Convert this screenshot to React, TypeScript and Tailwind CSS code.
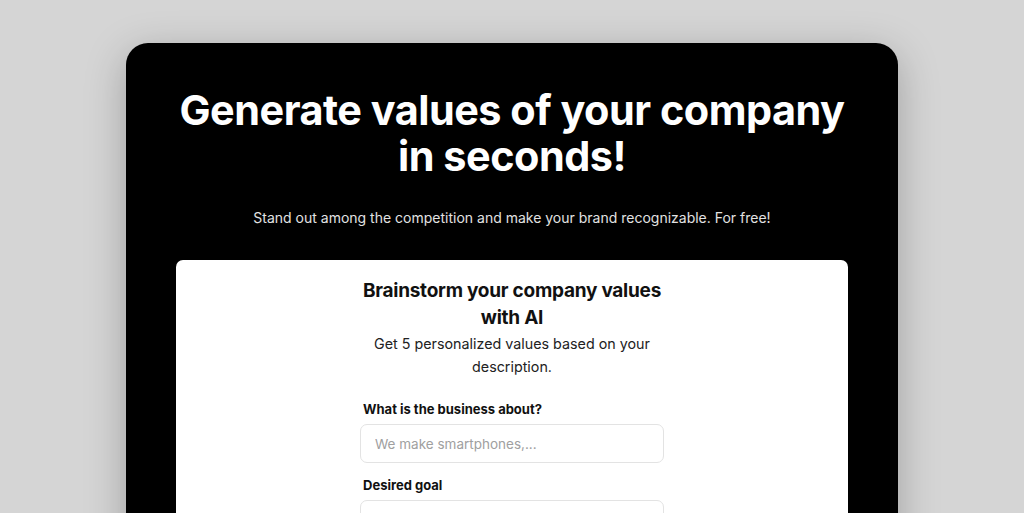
export default function App() {
  return (
    <div className="min-h-screen w-full bg-[#d5d5d5] pt-[43px] overflow-hidden">
      <div className="mx-auto w-[772px] rounded-[22px] bg-black pt-[44px] pb-[40px] shadow-[0_10px_40px_rgba(0,0,0,0.25)]">
        <h1 className="text-center text-white text-[41.4px] leading-[46px] font-bold tracking-[-0.5px] [font-family:Inter,'Noto_Sans',sans-serif]">
          Generate values of your company
          <br />
          in seconds!
        </h1>
        <p className="mt-[28px] text-center text-[14px] leading-[22px] text-[#e2e2e2] [font-family:Inter,sans-serif]">
          Stand out among the competition and make your brand recognizable. For free!
        </p>
        <div className="mx-[50px] mt-[31px] rounded-[7px] bg-white pt-[17px] pb-[40px]">
          <div className="mx-auto w-[304px] [font-family:Inter,sans-serif]">
            <h2 className="text-center text-[19px] leading-[27px] font-bold tracking-[-0.25px] text-[#111]">
              Brainstorm your company values with AI
            </h2>
            <p className="mt-[1px] text-center text-[14.3px] leading-[23px] text-[#222]">
              Get 5 personalized values based on your description.
            </p>
            <div className="mt-[21px]">
              <label className="block pl-[3px] text-[13px] leading-[20px] font-bold text-[#111]">
                What is the business about?
              </label>
              <input
                className="mt-[5px] block h-[39px] w-full rounded-[7px] border border-[#e3e3e3] px-[14px] text-[13.5px] text-[#222] placeholder:text-[#a0a0a0] outline-none"
                placeholder="We make smartphones,..."
              />
            </div>
            <div className="mt-[12px]">
              <label className="block pl-[3px] text-[13px] leading-[20px] font-bold text-[#111]">
                Desired goal
              </label>
              <input
                className="mt-[5px] block h-[39px] w-full rounded-[7px] border border-[#e3e3e3] px-[14px] text-[13.5px] text-[#222] placeholder:text-[#a0a0a0] outline-none"
                placeholder=""
              />
            </div>
          </div>
        </div>
      </div>
    </div>
  );
}
